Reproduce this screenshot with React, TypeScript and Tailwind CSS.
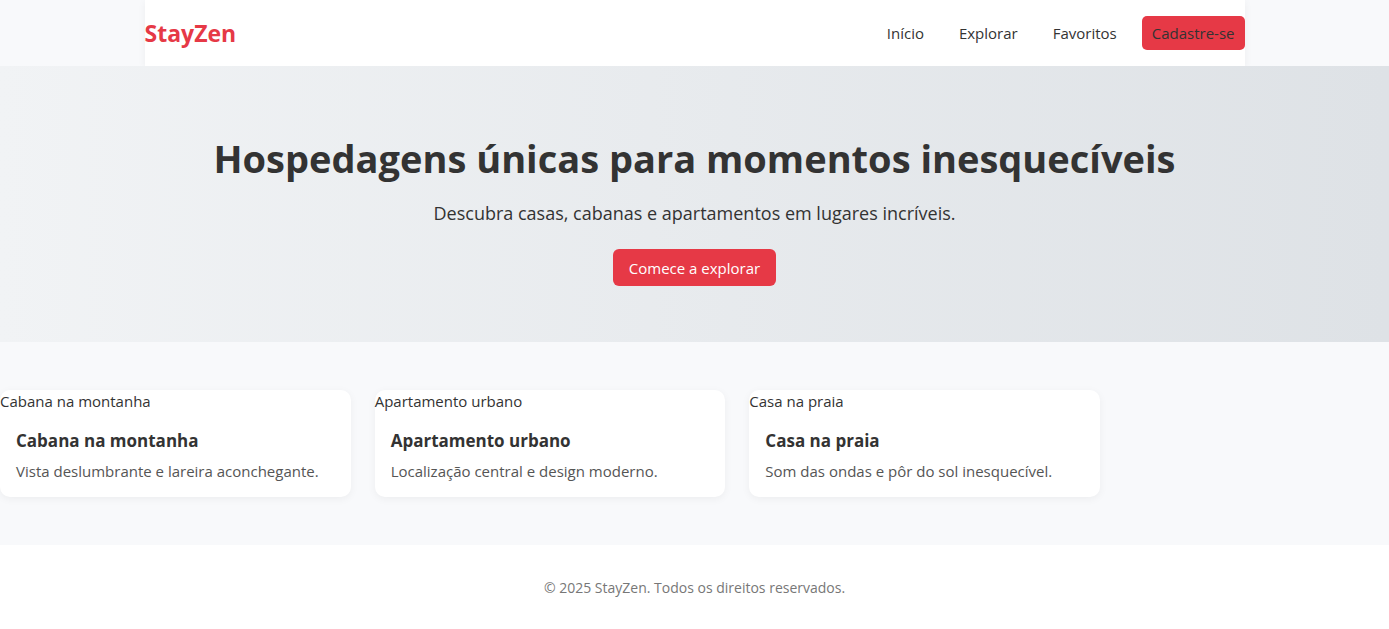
const stays = [
  { name: "Cabana na montanha", text: "Vista deslumbrante e lareira aconchegante." },
  { name: "Apartamento urbano", text: "Localização central e design moderno." },
  { name: "Casa na praia", text: "Som das ondas e pôr do sol inesquecível." },
];

export default function App() {
  return (
    <div className="min-h-screen bg-white font-['Open_Sans','Noto_Sans',sans-serif] text-[15px] text-[#333]">
      <div className="bg-[#f8f9fb]">
        <header className="mx-auto flex max-w-[1100px] items-center justify-between bg-white py-4 shadow-[0_2px_8px_rgba(0,0,0,0.05)]">
          <a href="#" className="text-[23px] leading-[34px] font-bold text-[#e63946]">StayZen</a>
          <nav className="flex items-center gap-[15px] leading-6">
            <a href="#" className="px-[10px] py-[5px]">Início</a>
            <a href="#" className="px-[10px] py-[5px]">Explorar</a>
            <a href="#" className="px-[10px] py-[5px]">Favoritos</a>
            <a href="#" className="rounded-[5px] bg-[#e63946] px-[10px] py-[5px]">Cadastre-se</a>
          </nav>
        </header>
      </div>
      <main className="relative bg-[#f8f9fb]">
        <section className="bg-linear-to-r from-[#f1f3f5] to-[#dee2e6] px-4 pt-16 pb-14 text-center">
          <h1 className="text-[38px] leading-[56px] font-bold">Hospedagens únicas para momentos inesquecíveis</h1>
          <p className="mt-[11px] text-lg leading-8">Descubra casas, cabanas e apartamentos em lugares incríveis.</p>
          <button className="mx-auto mt-5 block rounded-[6px] bg-[#e63946] px-4 pt-[7px] pb-[6px] leading-6 text-white">Comece a explorar</button>
        </section>
        <section className="grid max-w-[1100px] grid-cols-3 gap-6 py-12">
          {stays.map((stay) => (
            <article key={stay.name} className="rounded-[10px] bg-white shadow-[0_2px_8px_rgba(0,0,0,0.05)]">
              <div className="leading-[22px]">{stay.name}</div>
              <div className="px-4 pt-[15px] pb-[14px]">
                <h3 className="text-[17px] leading-7 font-bold">{stay.name}</h3>
                <p className="mt-1 leading-6 text-[#555]">{stay.text}</p>
              </div>
            </article>
          ))}
        </section>
      </main>
      <footer className="bg-white py-8 text-center text-sm leading-[22px] text-[#777]">© 2025 StayZen. Todos os direitos reservados.</footer>
    </div>
  );
}
